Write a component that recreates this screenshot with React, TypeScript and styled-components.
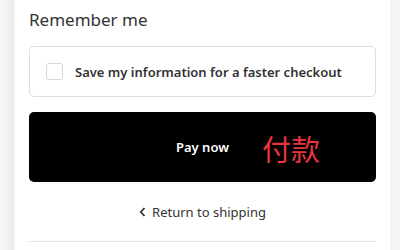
import React from "react";
import styled, { createGlobalStyle } from "styled-components";

const Global = createGlobalStyle`
  html, body { margin: 0; padding: 0; background: #f2f2f2; }
  body { font-family: "Noto Sans", "Open Sans", sans-serif; color: #333; }
`;

const Page = styled.div`
  display: flex;
  height: 250px;
  overflow: hidden;
  padding-left: 15px;
  padding-right: 10px;
  background: linear-gradient(to right, #f7f7f7 0, #ececec 14px, #f4f4f4 14px);
`;

const Panel = styled.div`
  flex: 1;
  background: #fff;
  padding: 8px 14px 0;
  display: flex;
  flex-direction: column;
`;

const Title = styled.h2`
  margin: 0;
  font-size: 17px;
  font-weight: 400;
  line-height: 24px;
  color: #333;
`;

const Card = styled.label`
  margin-top: 14px;
  height: 51px;
  box-sizing: border-box;
  border: 1px solid #dedede;
  border-radius: 5px;
  display: flex;
  align-items: center;
  padding: 0 16px;
  gap: 12px;
`;

const Box = styled.span`
  width: 17px;
  height: 17px;
  box-sizing: border-box;
  border: 1px solid #d6d6d6;
  border-radius: 3px;
  background: #fff;
`;

const CardText = styled.span`
  font-size: 13px;
  font-weight: 600;
  color: #333;
`;

const PayButton = styled.button`
  position: relative;
  margin-top: 15px;
  height: 70px;
  border: none;
  border-radius: 5px;
  background: #000;
  color: #fff;
  font-family: inherit;
  font-size: 13px;
  font-weight: 600;
  display: flex;
  align-items: center;
  justify-content: center;
`;

const Annotation = styled.span`
  position: absolute;
  left: 233px;
  top: 20px;
  font-family: "Noto Sans CJK SC", sans-serif;
  font-size: 29px;
  font-weight: 400;
  line-height: 32px;
  color: #e8353f;
`;

const BackLink = styled.a`
  margin-top: 21px;
  align-self: center;
  display: flex;
  align-items: center;
  gap: 6px;
  font-size: 13px;
  color: #333;
  text-decoration: none;
`;

const Divider = styled.hr`
  margin: 20px 0 0;
  border: none;
  border-top: 1px solid #e3e3e3;
`;

export default function App() {
  return (
    <>
      <Global />
      <Page>
        <Panel>
          <Title>Remember me</Title>
          <Card>
            <Box />
            <CardText>Save my information for a faster checkout</CardText>
          </Card>
          <PayButton>
            Pay now
            <Annotation>付款</Annotation>
          </PayButton>
          <BackLink href="#">
            <svg width="7" height="10" viewBox="0 0 7 10">
              <path d="M5.5 1 L1.8 5 L5.5 9" fill="none" stroke="#333" strokeWidth="1.8" />
            </svg>
            Return to shipping
          </BackLink>
          <Divider />
        </Panel>
      </Page>
    </>
  );
}
